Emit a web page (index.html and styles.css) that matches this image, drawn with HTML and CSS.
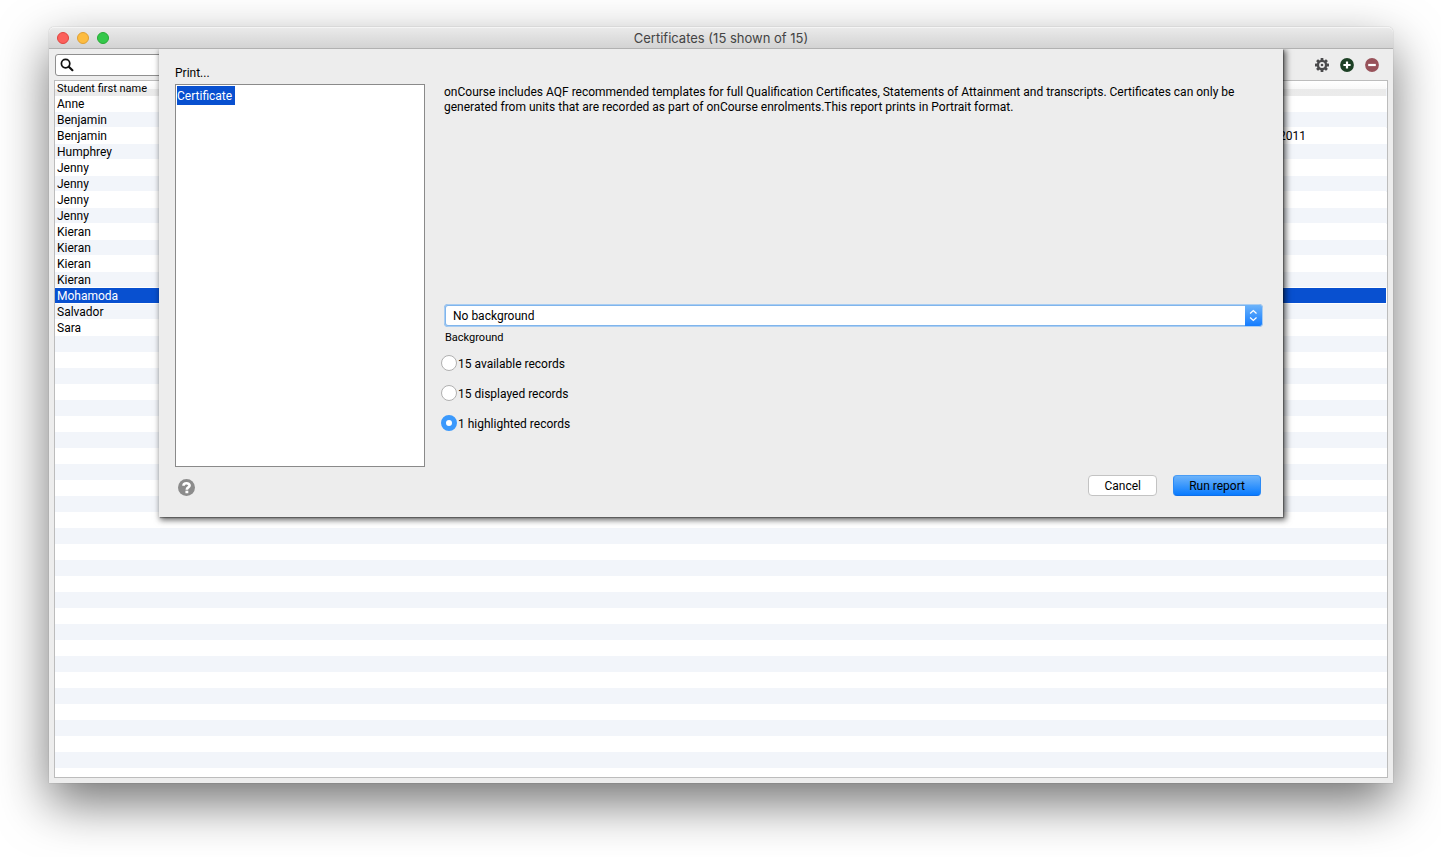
FILE: index.html
```html
<!DOCTYPE html>
<html lang="en">
<head>
<meta charset="utf-8">
<title>Certificates (15 shown of 15)</title>
<link rel="stylesheet" href="styles.css">
</head>
<body>
<main class="window">
  <header class="titlebar">
    <div class="lights">
      <button class="light close" aria-label="Close"></button>
      <button class="light minimise" aria-label="Minimise"></button>
      <button class="light maximise" aria-label="Zoom"></button>
    </div>
    <h1 class="title">Certificates (15 shown of 15)</h1>
  </header>

  <div class="toolbar">
    <label class="search">
      <svg class="search-icon" viewBox="0 0 14 14" aria-hidden="true"><circle cx="5.6" cy="5.6" r="4.2" fill="none" stroke="#111" stroke-width="1.7"/><path d="M8.8 8.8 12.4 12.2" stroke="#111" stroke-width="2.2" stroke-linecap="round"/></svg>
      <input class="search-input" type="text" aria-label="Search">
    </label>
    <div class="actions">
      <button class="action" aria-label="Settings">
        <svg viewBox="0 0 14 14"><g fill="#4a4a4c"><rect x="5.6" y="0" width="2.8" height="14" rx=".5"/><rect x="5.6" y="0" width="2.8" height="14" rx=".5" transform="rotate(45 7 7)"/><rect x="5.6" y="0" width="2.8" height="14" rx=".5" transform="rotate(90 7 7)"/><rect x="5.6" y="0" width="2.8" height="14" rx=".5" transform="rotate(135 7 7)"/><circle cx="7" cy="7" r="5.2"/></g><circle cx="7" cy="7" r="2.9" fill="#ededed"/><circle cx="7" cy="7" r="1.3" fill="#4a4a4c"/></svg>
      </button>
      <button class="action" aria-label="Add">
        <svg viewBox="0 0 14 14"><circle cx="7" cy="7" r="6.9" fill="#1d4025"/><path d="M7 3.4V10.6M3.4 7H10.6" stroke="#fff" stroke-width="2.2"/></svg>
      </button>
      <button class="action" aria-label="Remove">
        <svg viewBox="0 0 14 14"><circle cx="7" cy="7" r="6.9" fill="#98525a"/><path d="M3.2 7H10.8" stroke="#fff" stroke-width="2.2"/></svg>
      </button>
    </div>
  </div>

  <div class="list">
    <table class="records">
      <thead><tr><th>Student first name</th><th class="date"></th></tr></thead>
      <tbody>
        <tr><td>Anne</td><td></td></tr>
        <tr><td>Benjamin</td><td></td></tr>
        <tr><td>Benjamin</td><td>2011</td></tr>
        <tr><td>Humphrey</td><td></td></tr>
        <tr><td>Jenny</td><td></td></tr>
        <tr><td>Jenny</td><td></td></tr>
        <tr><td>Jenny</td><td></td></tr>
        <tr><td>Jenny</td><td></td></tr>
        <tr><td>Kieran</td><td></td></tr>
        <tr><td>Kieran</td><td></td></tr>
        <tr><td>Kieran</td><td></td></tr>
        <tr><td>Kieran</td><td></td></tr>
        <tr class="selected"><td>Mohamoda</td><td></td></tr>
        <tr><td>Salvador</td><td></td></tr>
        <tr><td>Sara</td><td></td></tr>
      </tbody>
    </table>
  </div>

  <form class="sheet">
    <h2 class="sheet-title">Print...</h2>
    <div class="columns">
      <ul class="reports">
        <li><button type="button" class="report">Certificate</button></li>
      </ul>
      <div class="options">
        <p class="description">onCourse includes AQF recommended templates for full Qualification Certificates, Statements of Attainment and transcripts. Certificates can only be generated from units that are recorded as part of onCourse enrolments.This report prints in Portrait format.</p>
        <div class="popup">
          <select class="popup-select" id="background"><option>No background</option></select>
          <svg class="popup-arrows" viewBox="0 0 18 20" aria-hidden="true"><path d="M5.4 7.8 8.8 4.8 12.2 7.8M5.4 12.2 8.8 15.2 12.2 12.2" fill="none" stroke="#fff" stroke-width="1.4"/></svg>
        </div>
        <label class="caption" for="background">Background</label>
        <div class="scope">
          <label class="choice"><input class="radio" type="radio" name="scope"><span class="choice-text">15 available records</span></label>
          <label class="choice"><input class="radio" type="radio" name="scope"><span class="choice-text">15 displayed records</span></label>
          <label class="choice"><input class="radio" type="radio" name="scope" checked><span class="choice-text">1 highlighted records</span></label>
        </div>
      </div>
    </div>
    <footer class="sheet-footer">
      <button type="button" class="help" aria-label="Help">
        <svg viewBox="0 0 16 16"><circle cx="8" cy="8" r="8" fill="#8c8c8c"/><path d="M5.2 6.3C5.2 3.3 10.9 3.3 10.9 6.2 10.9 8 8.3 7.8 8.3 10" fill="none" stroke="#fff" stroke-width="2.5"/><rect x="7" y="11" width="2.7" height="2.4" fill="#fff"/></svg>
      </button>
      <div class="buttons">
        <button type="button" class="button">Cancel</button>
        <button type="button" class="button primary">Run report</button>
      </div>
    </footer>
  </form>
</main>
</body>
</html>
```
FILE: styles.css
```css
* { box-sizing: border-box; }

body {
  margin: 0;
  min-height: 100vh;
  padding: 27px 48px 74px 49px;
  display: flex;
  background: #fff;
  color: #000;
  font: 12px/16px Roboto, "Liberation Sans", sans-serif;
}

button, input, select { font: inherit; color: inherit; }
button { border: 0; padding: 0; background: none; }
svg { display: block; }

.window {
  position: relative;
  flex: 1;
  display: flex;
  flex-direction: column;
  padding: 0 5px 5px;
  background: #ededed;
  border-radius: 5px 5px 0 0;
  box-shadow: 0 0 1px rgba(0, 0, 0, .45), 0 20px 50px rgba(0, 0, 0, .55);
}

.titlebar {
  position: relative;
  z-index: 2;
  display: grid;
  grid-template-columns: 1fr auto 1fr;
  align-items: center;
  height: 22px;
  margin: 0 -5px;
  padding: 0 8px;
  border-bottom: 1px solid #b1b1b1;
  border-radius: 5px 5px 0 0;
  background: linear-gradient(#ebebeb, #d3d3d3);
  box-shadow: inset 0 1px #f5f5f5;
}
.lights { display: flex; gap: 8px; }
.light { width: 12px; height: 12px; border-radius: 50%; border: 1px solid; }
.close { background: #fc605b; border-color: #e0443f; }
.minimise { background: #fdbc40; border-color: #dfa034; }
.maximise { background: #34c84a; border-color: #27aa35; }
.title { margin: 0; font-family: Inter, Roboto, sans-serif; font-size: 13px; font-weight: 400; color: #444; }

.toolbar {
  display: flex;
  justify-content: space-between;
  align-items: center;
  height: 31px;
  padding: 0 9px 0 1px;
}
.search {
  display: flex;
  align-items: center;
  width: 200px;
  height: 22px;
  padding: 0 4px;
  background: #fff;
  border: 1px solid #8f8f8f;
  border-radius: 3px;
}
.search-icon { width: 14px; height: 14px; flex: none; }
.search-input { flex: 1; min-width: 0; border: 0; outline: 0; background: none; }
.actions { display: flex; gap: 11px; }
.action { width: 14px; height: 14px; }

.list {
  flex: 1;
  padding-right: 1px;
  border: 1px solid #bcbcbc;
  background: repeating-linear-gradient(#fff 0 16px, #f2f5fa 16px 32px) 0 15px #fff;
}
.records { width: 100%; table-layout: fixed; border-collapse: separate; border-spacing: 0; }
.records th {
  height: 15px;
  padding: 0 2px;
  text-align: left;
  font-size: 11px;
  line-height: 15px;
  font-weight: 400;
  background: linear-gradient(#fff, #f8f8f8 8px, #eaeaea 8px, #ebebeb);
}
.records .date { width: 109px; }
.records td { height: 16px; padding: 2px 2px 0; border-bottom: 1px solid #fff; line-height: 13px; }
.records .selected td { background: #0850d0; color: #fff; }

.sheet {
  position: absolute;
  top: 22px;
  left: 110px;
  right: 110px;
  z-index: 1;
  padding: 16px 20px 21px 16px;
  background: #ededed;
  box-shadow: 2px 2px 6px 1px rgba(0, 0, 0, .6), 1px 1px 1px rgba(0, 0, 0, .3);
}
.sheet-title { margin: 0 0 3px; font-size: 12px; font-weight: 400; }
.columns { display: grid; grid-template-columns: 250px 1fr; gap: 19px; }
.reports {
  margin: 0;
  padding: 1px;
  min-height: 383px;
  list-style: none;
  background: #fff;
  border: 1px solid #8a8a8a;
}
.report { display: block; height: 19px; padding: 0 3px 0 0; background: #0850d0; color: #fff; }
.options { display: flex; flex-direction: column; align-items: flex-start; }
.description { margin: 0; padding-top: 1px; min-height: 220px; line-height: 15px; }
.popup { position: relative; width: 100%; }
.popup-select {
  display: block;
  width: 100%;
  height: 23px;
  padding: 0 26px 0 7px;
  appearance: none;
  background: #fff;
  border: 2px solid #80b5ec;
  border-radius: 4px;
  outline: 1px solid #a9cdf2;
  outline-offset: -1px;
}
.popup-arrows {
  position: absolute;
  top: 1px;
  right: 1px;
  width: 17px;
  height: 21px;
  border-radius: 0 3px 3px 0;
  background: linear-gradient(#6cb3fa, #147cff);
  pointer-events: none;
}
.caption { margin: 3px 0 0 1px; font-size: 11px; }
.scope { display: flex; flex-direction: column; gap: 12px; margin: 8px 0 0 -3px; }
.choice { display: flex; align-items: center; gap: 1px; height: 18px; }
.choice-text { padding-top: 2px; }
.radio {
  appearance: none;
  width: 16px;
  height: 16px;
  margin: 0;
  background: #fff;
  border: 1px solid #b0b0b0;
  border-radius: 50%;
}
.radio:checked { border: 5px solid #3b99fc; }

.sheet-footer {
  display: flex;
  justify-content: space-between;
  align-items: flex-end;
  margin-top: 8px;
  padding: 0 2px 0 3px;
}
.help { width: 17px; height: 18px; }
.buttons { display: flex; gap: 16px; }
.button {
  min-width: 69px;
  height: 21px;
  padding: 0 15px;
  background: #fff;
  border: 1px solid #c3c3c3;
  border-radius: 4px;
}
.primary {
  border-color: #4a9df5 #2b8af5 #0f6fe8;
  background: linear-gradient(#6cb3fa, #087bff);
}
```
